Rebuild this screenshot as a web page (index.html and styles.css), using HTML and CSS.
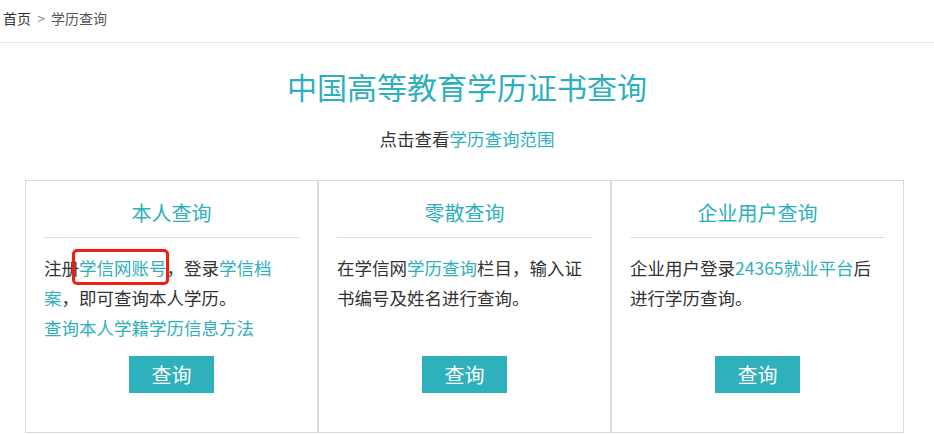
FILE: index.html
```html
<!DOCTYPE html>
<html lang="zh-CN">
<head>
  <meta charset="UTF-8">
  <title>学历查询</title>
  <link rel="stylesheet" href="styles.css">
</head>
<body>
  <div class="crumb">
    <a href="#" class="crumb-home">首页</a>
    <span class="crumb-sep">&gt;</span>
    <span class="crumb-cur">学历查询</span>
  </div>

  <h1 class="title">中国高等教育学历证书查询</h1>
  <p class="sub">点击查看<a href="#">学历查询范围</a></p>

  <div class="cards">
    <div class="card">
      <h3>本人查询</h3>
      <div class="card-text">
        注册<a href="#" class="mark">学信网账号</a>，登录<a href="#">学信档案</a>，即可查询本人学历。<br>
        <a href="#">查询本人学籍学历信息方法</a>
      </div>
      <button>查询</button>
    </div>

    <div class="card">
      <h3>零散查询</h3>
      <div class="card-text">
        在学信网<a href="#">学历查询</a>栏目，输入证书编号及姓名进行查询。
      </div>
      <button>查询</button>
    </div>

    <div class="card">
      <h3>企业用户查询</h3>
      <div class="card-text">
        企业用户登录<a href="#">24365就业平台</a>后进行学历查询。
      </div>
      <button>查询</button>
    </div>
  </div>
</body>
</html>
```

FILE: styles.css
```css
* {
  box-sizing: border-box;
}

body {
  margin: 0;
  font-family: "Noto Sans CJK SC", "Noto Sans", sans-serif;
  color: #333;
  background: #fff;
}

a {
  color: #2eafbe;
  text-decoration: none;
}

.crumb {
  height: 43px;
  line-height: 36px;
  padding-left: 3px;
  font-size: 14px;
  border-bottom: 1px solid #e6e6e6;
}

.crumb-home {
  color: #333;
}

.crumb-sep {
  color: #888;
  margin: 0 3px;
}

.crumb-cur {
  color: #555;
}

.title {
  margin: 23px 0 0;
  font-size: 30px;
  line-height: 40px;
  font-weight: normal;
  text-align: center;
  color: #2eafbe;
}

.sub {
  margin: 18px 0 0;
  font-size: 17.5px;
  line-height: 30px;
  text-align: center;
}

.cards {
  display: grid;
  grid-template-columns: repeat(3, 1fr);
  width: 879px;
  margin: 26px 0 0 25px;
}

.card {
  border: 1px solid #d9d9d9;
  padding: 17px 18px 39px;
  text-align: center;
}

.card h3 {
  margin: 0;
  padding-bottom: 9px;
  border-bottom: 1px solid #dcdcdc;
  font-size: 20px;
  line-height: 30px;
  font-weight: normal;
  color: #2eafbe;
}

.card-text {
  min-height: 90px;
  margin-top: 15px;
  font-size: 17.5px;
  line-height: 30px;
  text-align: left;
}

/* red annotation box drawn over the link */
.mark {
  position: relative;
}

.mark::after {
  content: "";
  position: absolute;
  left: -7px;
  right: -2px;
  top: -6px;
  bottom: -5px;
  border: 3px solid #f21d12;
  border-radius: 5px;
}

button {
  width: 85px;
  height: 37px;
  margin-top: 13px;
  padding: 0;
  border: none;
  background-color: #2fb0bd;
  color: #fff;
  font-family: inherit;
  font-size: 20px;
  cursor: pointer;
}
```
